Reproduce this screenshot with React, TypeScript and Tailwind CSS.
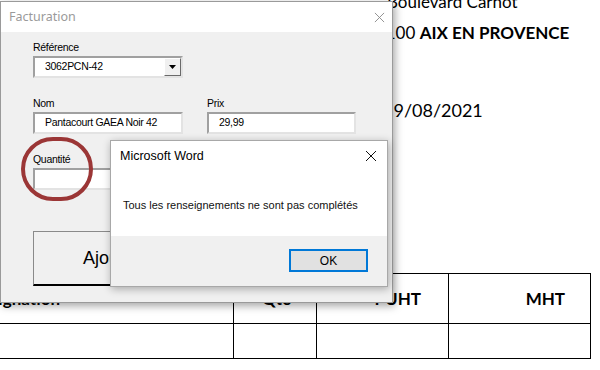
import React from "react";

const ui = { fontFamily: '"Liberation Sans", Arial, sans-serif' };
const doc = { fontFamily: 'Lato, "Liberation Sans", sans-serif' };

const Field = ({ value, className = "" }: { value?: string; className?: string }) => (
    <div
        className={`h-[22px] bg-white border-2 border-t-[#a0a0a0] border-l-[#a0a0a0] border-b-[#e3e3e3] border-r-[#e3e3e3] flex items-center pl-[10px] text-[10.5px] tracking-[-0.3px] text-black ${className}`}
    >
        {value}
    </div>
);

const Label = ({ children }: { children: React.ReactNode }) => (
    <div className="text-[10.5px] tracking-[-0.3px] text-black leading-[14px] mb-[2px]">{children}</div>
);

const CloseIcon = ({ color, size }: { color: string; size: number }) => (
    <svg width={size} height={size} viewBox="0 0 12 12" fill="none">
        <path d="M1 1L11 11M11 1L1 11" stroke={color} strokeWidth="1" />
    </svg>
);

const Document = () => (
    <div className="w-[600px] h-[370px] bg-white text-black" style={doc}>
        <div className="flex flex-col">
            <div className="text-[17px] leading-[20px] -mt-[8px] pl-[387px]">Boulevard Carnot</div>
            <div className="text-[17px] leading-[20px] mt-[11px] pl-[366px]">
                13100 <span className="font-bold">AIX EN PROVENCE</span>
            </div>
            <div className="text-[18px] leading-[22px] mt-[56px] pl-[383px]">19/08/2021</div>
        </div>
        <table className="mt-[152px] -ml-[40px] border-collapse text-[17px]">
            <tbody>
                <tr className="h-[50px] font-bold">
                    <td className="w-[273px] border border-black pl-[8px] text-left">Désignation</td>
                    <td className="w-[83px] border border-black pr-[25px] text-right">Qté</td>
                    <td className="w-[132px] border border-black pr-[27px] text-right">PUHT</td>
                    <td className="w-[142px] border border-black pr-[25px] text-right">MHT</td>
                </tr>
                <tr className="h-[35px]">
                    <td className="border border-black"></td>
                    <td className="border border-black"></td>
                    <td className="border border-black"></td>
                    <td className="border border-black"></td>
                </tr>
            </tbody>
        </table>
    </div>
);

const UserForm = () => (
    <div
        className="absolute left-0 top-[1px] w-[393px] h-[302px] border border-[#9a9a9a] bg-[#f0f0f0] shadow-[2px_3px_8px_rgba(0,0,0,0.35)] flex flex-col"
        style={ui}
    >
        <div className="h-[30px] bg-white flex items-center justify-between pl-[8px] pr-[7px]">
            <span className="text-[12.5px] text-[#9a9a9a]" style={{ fontFamily: '"Noto Sans", sans-serif' }}>
                Facturation
            </span>
            <CloseIcon color="#8a8a8a" size={11} />
        </div>
        <div className="flex flex-col pl-[32px] pt-[8px]">
            <Label>Référence</Label>
            <div className="relative w-[150px]">
                <Field value="3062PCN-42" />
                <div className="absolute right-[2px] top-[2px] w-[17px] h-[18px] bg-[#f0f0f0] border border-t-white border-l-white border-b-[#6a6a6a] border-r-[#6a6a6a] flex items-center justify-center">
                    <svg width="7" height="4" viewBox="0 0 7 4">
                        <path d="M0 0H7L3.5 4Z" fill="#000" />
                    </svg>
                </div>
            </div>
            <div className="flex gap-[24px] mt-[18px]">
                <div className="flex flex-col">
                    <Label>Nom</Label>
                    <Field value="Pantacourt GAEA Noir 42" className="w-[150px]" />
                </div>
                <div className="flex flex-col">
                    <Label>Prix</Label>
                    <Field value="29,99" className="w-[149px]" />
                </div>
            </div>
            <div className="flex flex-col mt-[18px]">
                <Label>Quantité</Label>
                <Field className="w-[150px]" />
            </div>
            <button className="mt-[41px] w-[158px] h-[55px] bg-[#f0f0f0] border border-t-[#8a8a8a] border-l-[#8a8a8a] border-b-2 border-r-2 border-b-black border-r-black text-[18px] text-black text-center">
                Ajouter
            </button>
        </div>
    </div>
);

const MessageBox = () => (
    <div
        className="absolute left-[110px] top-[140px] w-[278px] h-[147px] border border-[#a8a8a8] bg-white shadow-[1px_2px_8px_rgba(0,0,0,0.3)] flex flex-col"
        style={ui}
    >
        <div className="h-[30px] flex items-center justify-between pl-[9px] pr-[10px]">
            <span className="text-[12.5px] text-black">Microsoft Word</span>
            <CloseIcon color="#111" size={12} />
        </div>
        <div className="flex-1 flex items-center pl-[12px] pt-[3px] text-[11px] text-[#111]">
            Tous les renseignements ne sont pas complétés
        </div>
        <div className="h-[50px] bg-[#f0f0f0] flex items-center justify-end pr-[19px] pb-[1px]">
            <button className="w-[79px] h-[23px] bg-[#e1e1e1] border-2 border-[#0078d7] text-[12px] text-black">OK</button>
        </div>
    </div>
);

export default function App() {
    return (
        <div className="relative w-[600px] h-[370px] overflow-hidden bg-white">
            <Document />
            <UserForm />
            <div className="absolute left-[21px] top-[137px] w-[72px] h-[64px] rounded-full border-4 border-[#9b3636]"></div>
            <MessageBox />
        </div>
    );
}
